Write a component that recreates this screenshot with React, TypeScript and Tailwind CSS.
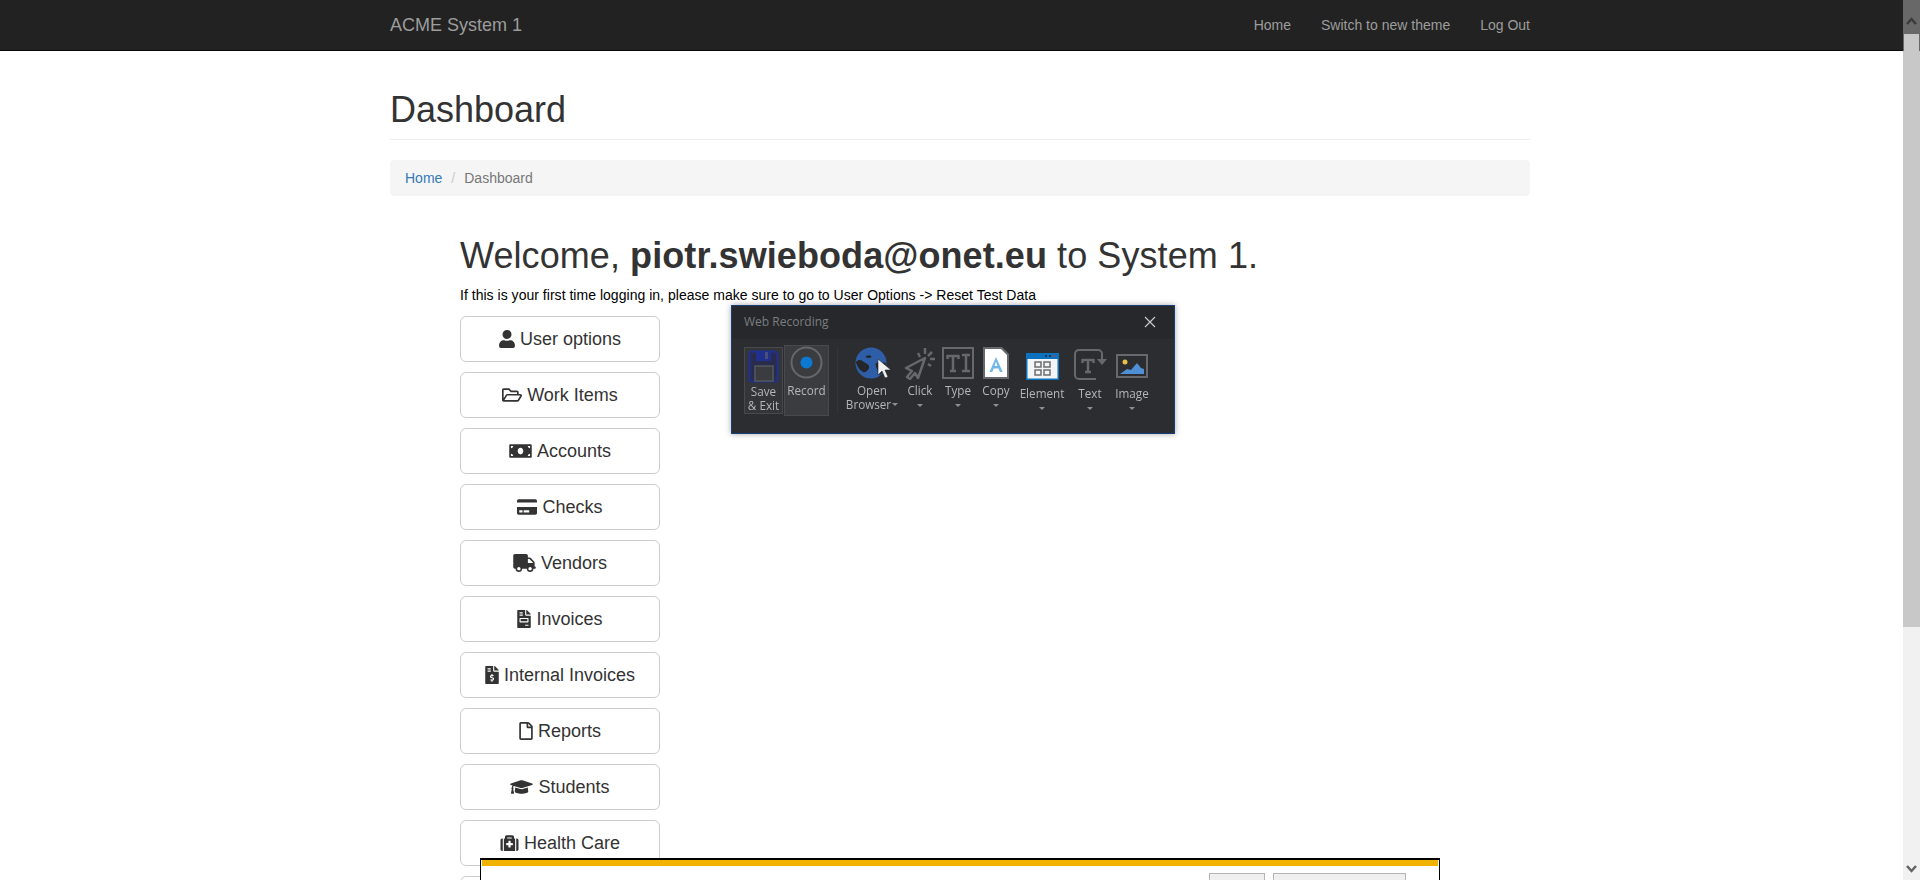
import React from "react";
import {
  FaUser, FaRegFolderOpen, FaMoneyBill, FaCreditCard, FaTruck, FaFileInvoice,
  FaFileInvoiceDollar, FaRegFile, FaGraduationCap, FaMedkit,
} from "react-icons/fa";

const buttons: [React.ComponentType<{ className?: string }>, string, string][] = [
  [FaUser, "User options", "w-[16px] h-[18px]"],
  [FaRegFolderOpen, "Work Items", "w-[20px] h-[18px]"],
  [FaMoneyBill, "Accounts", "w-[23px] h-[18px]"],
  [FaCreditCard, "Checks", "w-[20px] h-[18px]"],
  [FaTruck, "Vendors", "w-[23px] h-[18px]"],
  [FaFileInvoice, "Invoices", "w-[14px] h-[18px]"],
  [FaFileInvoiceDollar, "Internal Invoices", "w-[14px] h-[18px]"],
  [FaRegFile, "Reports", "w-[14px] h-[18px]"],
  [FaGraduationCap, "Students", "w-[23px] h-[18px]"],
  [FaMedkit, "Health Care", "w-[19px] h-[18px]"],
  [FaUser, "", "w-0 h-0"],
];

function Caret({ className = "" }: { className?: string }) {
  return <div className={`w-0 h-0 border-x-[3px] border-x-transparent border-t-[3px] border-t-[#8d8f92] ${className}`} />;
}

function Tool({ w, icon, label, pt }: { w: string; icon: React.ReactNode; label: string; pt: string }) {
  return (
    <div className={`${w} flex flex-col items-center`}>
      <div className="h-[34px] flex items-center justify-center">{icon}</div>
      <div className={`${pt} text-[11.7px] leading-[14px] text-[#b4b6b8]`}>{label}</div>
      <Caret className="mt-[7px]" />
    </div>
  );
}

function WebRecording() {
  return (
    <div className="absolute left-[731px] top-[305px] w-[444px] h-[129px] bg-[#2b2d31] border border-[#173f7a] shadow-[0_0_6px_rgba(0,0,0,0.35)] font-['Open_Sans',sans-serif] blur-[0.4px]">
      <div className="h-[33px] bg-[#26282b] flex items-center justify-between pl-[12px] pr-[18px] pb-[2px]">
        <span className="text-[12px] text-[#7b7d80]">Web Recording</span>
        <svg width="12" height="12" viewBox="0 0 12 12" stroke="#c8c9ca" strokeWidth="1.2"><path d="M1 1l10 10M11 1L1 11" /></svg>
      </div>
      <div className="flex pl-[12px] pt-[6px]">
        <div className="w-[39px] h-[67px] mt-[2px] bg-[#333539] border border-[#47494d] flex flex-col items-center pt-[2px]">
          <svg width="31" height="33" viewBox="0 0 31 33" fill="none">
            <path d="M3 1.500h24l2.500 2.500v25a2.500 2.500 0 0 1-2.500 2.500H4a2.500 2.500 0 0 1-2.500-2.500V4A2.500 2.500 0 0 1 3 1.500z" fill="#2a2c4e" stroke="#20308f" strokeWidth="2" />
            <rect x="8" y="1" width="15" height="10" fill="#20308f" />
            <rect x="17" y="2" width="3" height="7" fill="#4a4f7a" />
            <rect x="7" y="16" width="18" height="15" fill="#3a3c40" stroke="#55575b" strokeWidth="1.500" />
          </svg>
          <div className="text-[11.7px] leading-[13.5px] text-[#b4b6b8] text-center mt-[2px] whitespace-nowrap">Save<br />&amp; Exit</div>
        </div>
        <div className="w-[45px] h-[71px] ml-[1px] bg-[#3a3c40] border border-[#47494d] flex flex-col items-center">
          <svg width="33" height="33" viewBox="0 0 33 33" fill="none">
            <circle cx="16.5" cy="16.5" r="15" stroke="#66686b" strokeWidth="2" />
            <circle cx="16.5" cy="16.5" r="6" fill="#0a79cf" />
          </svg>
          <div className="text-[11.7px] leading-[14px] text-[#b4b6b8] mt-[4px]">Record</div>
        </div>
        <div className="w-px h-[66px] bg-[#33353a] ml-[8px] mt-[2px]" />
        <div className="flex ml-[4px] pt-[1px]">
          <div className="w-[60px] flex flex-col items-center">
            <div className="h-[34px] flex items-center justify-center">
              <svg width="40" height="34" viewBox="0 0 40 34" className="ml-[4px]">
                <circle cx="17" cy="17" r="15.500" fill="#2f5ea8" />
                <path d="M2 16c3-3 5-2 8 0s6 3 5 6-4 5-6 4-4-3-5-5-2-4-2-5zM12 10c2-1 4-1 5 0s0 2-2 2-4-1-3-2zM22 17c3-1 7-1 10 0 0 5-3 10-6 12-2-1-2-4-3-6s-2-5-1-6z" fill="#24262a" />
                <path d="M24 13v16l4-4 3 7 3-1-3-7h6z" fill="#f2f2f2" stroke="#24262a" strokeWidth=".6" />
              </svg>
            </div>
            <div className="text-[11.7px] leading-[14px] text-[#b4b6b8] text-center mt-[3px]">Open</div>
            <div className="flex items-center text-[11.7px] leading-[14px] text-[#b4b6b8]">Browser<Caret className="ml-[1px]" /></div>
          </div>
          <Tool w="w-[36px]" pt="pt-[3px]" label="Click" icon={
            <svg width="32" height="33" viewBox="0 0 32 33" fill="none">
              <path d="M21 11L2 21l6 3-5 6 3 2 5-6 3 5z" stroke="#66686b" strokeWidth="2.500" strokeLinejoin="round" />
              <path d="M14 6l2 4M21 1v6M28 5l-4 4M31 12h-5M27 19l-3-2" stroke="#66686b" strokeWidth="2.500" />
            </svg>} />
          <Tool w="w-[40px]" pt="pt-[3px]" label="Type" icon={
            <svg width="32" height="32" viewBox="0 0 32 32" fill="none">
              <rect x="1" y="1" width="30" height="30" stroke="#66686b" strokeWidth="2" />
              <path d="M5 9h12M5.500 8v4M16.500 8v4M11 9v14M8 24h6M20 8h8M24 8v16M20 24h8" stroke="#66686b" strokeWidth="2.500" />
            </svg>} />
          <Tool w="w-[36px]" pt="pt-[3px]" label="Copy" icon={
            <svg width="26" height="32" viewBox="0 0 26 32">
              <path d="M0 0h19l7 7v25H0z" fill="#66686b" />
              <path d="M2 2h16l6 6v22H2z" fill="#ffffff" />
              <path d="M13 10l-6.500 15h2.800l1.300-3.500h5l1.300 3.500h2.800zM11.500 19l1.500-4.500 1.500 4.500z" fill="#6fb7e8" />
            </svg>} />
          <Tool w="w-[56px]" pt="pt-[6px]" label="Element" icon={
            <svg width="33" height="27" viewBox="0 0 33 27" className="mt-[6px]">
              <rect width="33" height="27" fill="#0d72bd" />
              <rect x="1.500" y="6" width="30" height="19.500" fill="#f4f4f4" />
              <circle cx="20" cy="3" r="1" fill="#1b2b3a" /><circle cx="24" cy="3" r="1" fill="#1b2b3a" /><circle cx="28" cy="3" r="1" fill="#c8323a" />
              <g fill="none" stroke="#6b6d70" strokeWidth="1.500">
                <rect x="9" y="9" width="6" height="5" /><rect x="18" y="9" width="6" height="5" />
                <rect x="9" y="17" width="6" height="5" /><rect x="18" y="17" width="6" height="5" />
              </g>
            </svg>} />
          <Tool w="w-[40px]" pt="pt-[6px]" label="Text" icon={
            <svg width="33" height="31" viewBox="0 0 33 31" fill="none" className="mt-[3px]">
              <path d="M22 30H5a4 4 0 0 1-4-4V5a4 4 0 0 1 4-4h19a4 4 0 0 1 4 4v6" stroke="#66686b" strokeWidth="2" />
              <path d="M23 10h10l-5 6z" fill="#66686b" />
              <path d="M8 11h12M8.500 10v4M19.500 10v4M14 10v13M11 23h6" stroke="#66686b" strokeWidth="2.500" />
            </svg>} />
          <Tool w="w-[44px]" pt="pt-[6px]" label="Image" icon={
            <svg width="32" height="24" viewBox="0 0 32 24" fill="none" className="mt-[5px]">
              <rect x="1" y="1" width="30" height="22" stroke="#66686b" strokeWidth="2" />
              <circle cx="9" cy="8" r="2.500" fill="#e6c14a" />
              <path d="M4 20l7-5 4 1 6-7 4 5 3 1v5z" fill="#4f8fd6" />
            </svg>} />
        </div>
      </div>
    </div>
  );
}

export default function App() {
  return (
    <div className="relative h-[880px] overflow-hidden bg-white font-['Liberation_Sans',Arial,sans-serif] text-[14px] leading-[20px] text-[#333]">
      <nav className="h-[51px] bg-[#222] border-b border-[#080808]">
        <div className="w-[1140px] mx-auto h-[50px] flex items-center justify-between">
          <span className="text-[18px] text-[#9d9d9d]">ACME System 1</span>
          <div className="flex gap-[30px] text-[#9d9d9d]">
            <span>Home</span><span>Switch to new theme</span><span>Log Out</span>
          </div>
        </div>
      </nav>
      <main className="w-[1140px] mx-auto pt-[39px]">
        <div className="border-b border-[#eee] pb-[9px] mb-[20px]">
          <h1 className="text-[36px] leading-[39.6px] font-normal">Dashboard</h1>
        </div>
        <div className="h-[36px] bg-[#f5f5f5] rounded-[4px] px-[15px] flex items-center mb-[40px]">
          <span className="text-[#337ab7]">Home</span>
          <span className="text-[#ccc] px-[9px]">/</span>
          <span className="text-[#777]">Dashboard</span>
        </div>
        <div className="ml-[70px]">
          <h1 className="text-[36px] leading-[39.6px] font-normal mb-[10px] tracking-[0.08px]">
            Welcome, <b>piotr.swieboda@onet.eu</b> to System 1.
          </h1>
          <p className="text-black mb-[11px] tracking-[0.025px]">If this is your first time logging in, please make sure to go to User Options -&gt; Reset Test Data</p>
          <div className="flex flex-col gap-[10px] w-[200px]">
            {buttons.map(([Icon, label, size], i) => (
              <div key={i} className="h-[46px] shrink-0 border border-[#ccc] rounded-[6px] flex items-center justify-center text-[18px] gap-[5px]">
                {label && <Icon className={size} />}
                {label && <span>{label}</span>}
              </div>
            ))}
          </div>
        </div>
      </main>

      <WebRecording />

      <div className="absolute left-[480px] top-[858px] w-[960px] h-[40px] bg-white border-x border-t-2 border-black px-px">
        <div className="h-[6px] bg-[#f2b200]" />
        <div className="flex justify-end gap-[8px] pr-[32px] pt-[7px]">
          <div className="w-[56px] h-[30px] bg-[#efefef] border border-[#b5b5b5]" />
          <div className="w-[133px] h-[30px] bg-[#efefef] border border-[#b5b5b5]" />
        </div>
      </div>

      <div className="absolute right-0 top-0 w-[17px] h-[880px] bg-[#f1f1f1]" />
      <div className="absolute right-0 top-0 w-[17px] h-[51px] bg-[#686868]" />
      <svg className="absolute right-[3px] top-[17px]" width="11" height="8" viewBox="0 0 11 8" fill="none" stroke="#3a3a3a" strokeWidth="2.500"><path d="M1 7l4.500-5L10 7" /></svg>
      <div className="absolute right-[1px] top-[34px] w-[15px] h-[17px] bg-[#c8c8c8]" />
      <div className="absolute right-0 top-[51px] w-[17px] h-[576px] bg-[#c8c8c8]" />
      <svg className="absolute right-[3px] bottom-[7px]" width="11" height="8" viewBox="0 0 11 8" fill="none" stroke="#636363" strokeWidth="2.500"><path d="M1 1l4.500 5L10 1" /></svg>
    </div>
  );
}
